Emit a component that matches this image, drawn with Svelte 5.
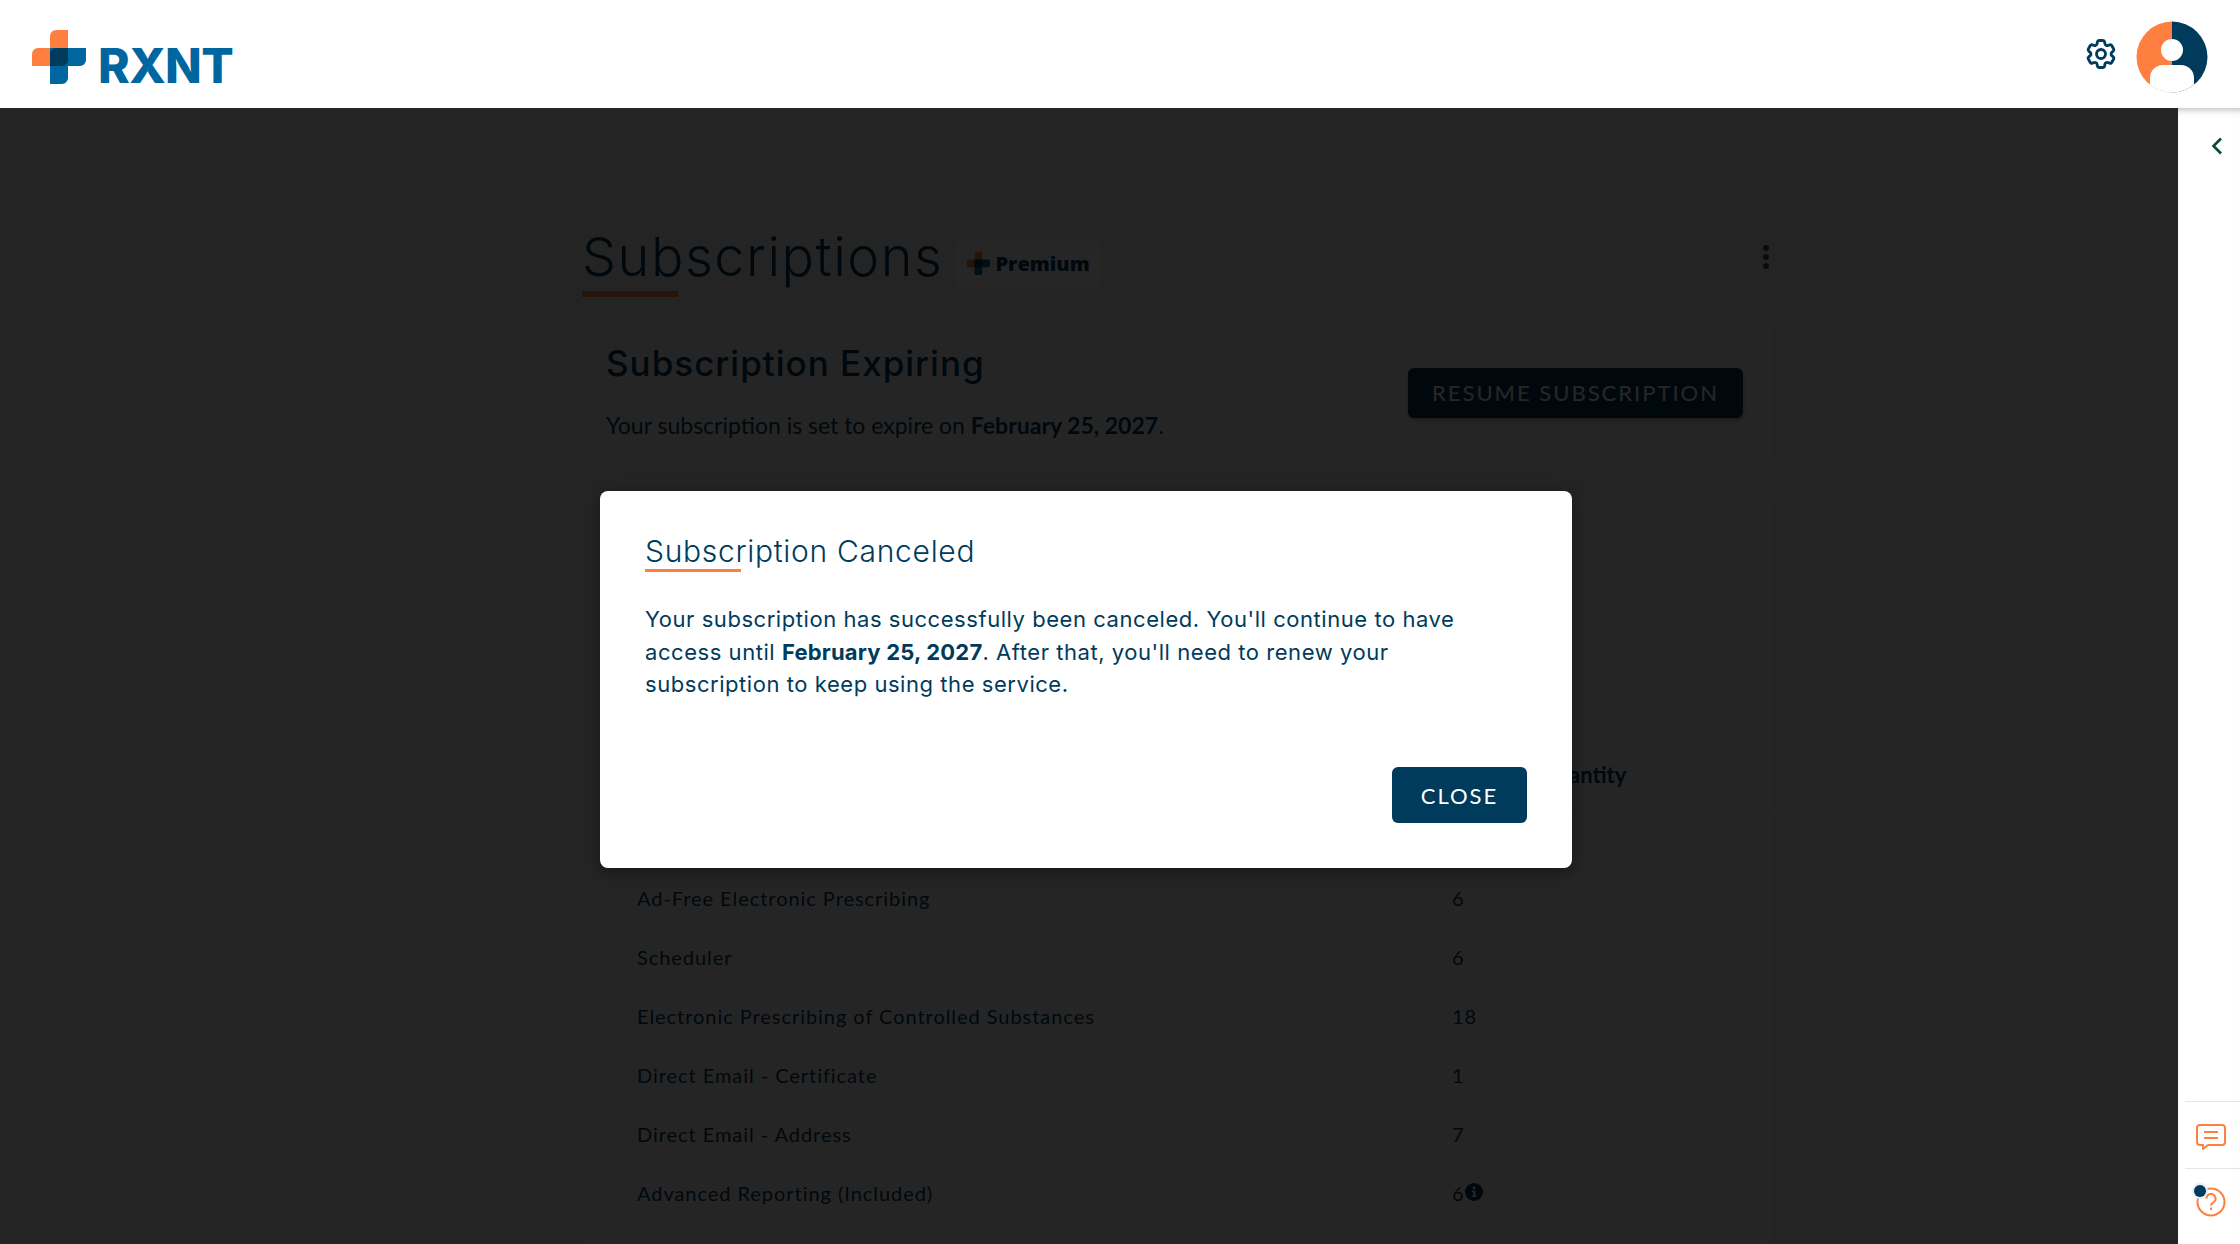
<script>
  const rows = [
    { name: 'Ad-Free Electronic Prescribing', qty: 6 },
    { name: 'Scheduler', qty: 6 },
    { name: 'Electronic Prescribing of Controlled Substances', qty: 18 },
    { name: 'Direct Email - Certificate', qty: 1 },
    { name: 'Direct Email - Address', qty: 7 },
    { name: 'Advanced Reporting (Included)', qty: 6, info: true }
  ];
</script>

<div class="app">
  <header class="topbar">
    <div class="logo">
      <svg width="56" height="56" viewBox="0 0 56 56" aria-hidden="true">
        <path d="M26 2H38V38H2V26a6 6 0 0 1 6-6H20V8a6 6 0 0 1 6-6z" fill="#ff7f41" />
        <path d="M20 20H56V32a6 6 0 0 1-6 6H38V50a6 6 0 0 1-6 6H20z" fill="#00669f" />
        <path d="M26 20H38V32a6 6 0 0 1-6 6H20V26a6 6 0 0 1 6-6z" fill="#003b5c" />
      </svg>
      <span class="wordmark">RXNT</span>
    </div>
    <div class="topbar-right">
      <svg class="gear" width="36" height="36" viewBox="0 0 24 24" fill="none" stroke="#003b5c" stroke-width="1.9" aria-hidden="true">
        <path d="M9.594 3.94c.09-.542.56-.94 1.11-.94h2.593c.55 0 1.02.398 1.11.94l.213 1.281c.063.374.313.686.645.87.074.04.147.083.22.127.325.196.72.257 1.075.124l1.217-.456a1.125 1.125 0 0 1 1.37.49l1.296 2.247a1.125 1.125 0 0 1-.26 1.431l-1.003.827c-.293.241-.438.613-.43.992a7.723 7.723 0 0 1 0 .255c-.008.378.137.75.43.991l1.004.827c.424.35.534.955.26 1.43l-1.298 2.247a1.125 1.125 0 0 1-1.369.491l-1.217-.456c-.355-.133-.75-.072-1.076.124a6.47 6.47 0 0 1-.22.128c-.331.183-.581.495-.644.869l-.213 1.281c-.09.543-.56.94-1.11.94h-2.594c-.55 0-1.019-.398-1.11-.94l-.213-1.281c-.062-.374-.312-.686-.644-.87a6.52 6.52 0 0 1-.22-.127c-.325-.196-.72-.257-1.076-.124l-1.217.456a1.125 1.125 0 0 1-1.369-.49l-1.297-2.247a1.125 1.125 0 0 1 .26-1.431l1.004-.827c.292-.24.437-.613.43-.991a6.932 6.932 0 0 1 0-.255c.007-.38-.138-.751-.43-.992l-1.004-.827a1.125 1.125 0 0 1-.26-1.43l1.297-2.247a1.125 1.125 0 0 1 1.37-.491l1.216.456c.356.133.751.072 1.076-.124.072-.044.146-.086.22-.128.332-.183.582-.495.644-.869l.214-1.28Z" />
        <circle cx="12" cy="12" r="3" />
      </svg>
      <svg class="avatar" width="72" height="72" viewBox="0 0 72 72" aria-hidden="true">
        <defs>
          <clipPath id="avatarClip"><circle cx="36" cy="36" r="35.5" /></clipPath>
        </defs>
        <g clip-path="url(#avatarClip)">
          <rect width="36" height="72" fill="#ff7f41" />
          <rect x="36" width="36" height="72" fill="#003b5c" />
          <circle cx="36" cy="29" r="11" fill="#fff" />
          <rect x="14" y="44" width="44" height="40" rx="13" fill="#fff" />
        </g>
      </svg>
    </div>
  </header>

  <div class="workspace">
    <main class="main">
      <div class="content">
        <div class="title-row">
          <h1 class="page-title">Subscriptions</h1>
          <span class="badge">
            <svg width="24" height="24" viewBox="0 0 56 56" aria-hidden="true">
              <path d="M26 2H38V38H2V26a6 6 0 0 1 6-6H20V8a6 6 0 0 1 6-6z" fill="#ff7f41" />
              <path d="M20 20H56V32a6 6 0 0 1-6 6H38V50a6 6 0 0 1-6 6H20z" fill="#00669f" />
              <path d="M26 20H38V32a6 6 0 0 1-6 6H20V26a6 6 0 0 1 6-6z" fill="#003b5c" />
            </svg>
            Premium
          </span>
          <div class="kebab"><i></i><i></i><i></i></div>
        </div>

        <section class="card expiring">
          <div class="expiring-text">
            <h2>Subscription Expiring</h2>
            <p>Your subscription is set to expire on <b>February 25, 2027</b>.</p>
          </div>
          <button class="resume">RESUME SUBSCRIPTION</button>
        </section>

        <section class="card details">
          <div class="table-head"><span>Quantity</span></div>
          {#each rows as row}
            <div class="row">
              <span>{row.name}</span>
              <span class="qty">
                {row.qty}
                {#if row.info}
                  <svg class="info" width="18" height="18" viewBox="0 0 18 18" aria-hidden="true">
                    <circle cx="9" cy="9" r="9" fill="#003b5c" />
                    <rect x="7.8" y="3.5" width="2.6" height="2.6" fill="#fff" />
                    <path d="M6.8 7.4h3.6v5h1.2v1.6H6.8v-1.6H8v-3.4H6.8z" fill="#fff" />
                  </svg>
                {/if}
              </span>
            </div>
          {/each}
        </section>
      </div>

      <div class="overlay">
        <div class="modal">
          <h3>Subscription Canceled</h3>
          <p>Your subscription has successfully been canceled. You'll continue to have access until <b>February 25, 2027</b>. After that, you'll need to renew your subscription to keep using the service.</p>
          <div class="modal-actions">
            <button class="close">CLOSE</button>
          </div>
        </div>
      </div>
    </main>

    <aside class="sidebar">
      <div class="collapse">
        <svg width="12" height="18" viewBox="0 0 12 18" fill="none" stroke="#0b4a3a" stroke-width="2.6" aria-hidden="true">
          <path d="M10 1.5 2.5 9l7.5 7.5" />
        </svg>
      </div>
      <div class="side-actions">
        <div class="side-item chat">
          <svg width="30" height="26" viewBox="0 0 30 26" fill="none" stroke="#ff7f41" stroke-width="2" aria-hidden="true">
            <path d="M4 1h22a3 3 0 0 1 3 3v14a3 3 0 0 1-3 3H12l-5 4v-4H4a3 3 0 0 1-3-3V4a3 3 0 0 1 3-3z" stroke-linejoin="round" />
            <path d="M8 8h14M8 14h14" />
          </svg>
        </div>
        <div class="side-item help">
          <span class="dot"></span>
          <svg width="30" height="30" viewBox="0 0 30 30" fill="none" stroke="#ff7f41" stroke-width="2" aria-hidden="true">
            <circle cx="15" cy="15" r="13.5" />
            <path d="M10.5 11.5a4.5 4.5 0 1 1 6.8 3.8c-1.4.9-2.3 1.7-2.3 3.4" />
            <path d="M15 20.5v2.5" />
          </svg>
        </div>
      </div>
    </aside>
  </div>
</div>

<style>
  :global(body) {
    margin: 0;
    overflow: hidden;
    background: #fff;
  }

  .app {
    display: flex;
    flex-direction: column;
    height: 1244px;
    color: #003b5c;
    font-family: Lato, "Open Sans", sans-serif;
  }

  .topbar {
    position: relative;
    z-index: 2;
    flex: 0 0 108px;
    display: flex;
    align-items: center;
    justify-content: space-between;
    padding: 0 32px 0 30px;
    background: #fff;
  }

  .logo {
    display: flex;
    align-items: center;
    gap: 12px;
    margin-top: 4px;
  }

  .wordmark {
    font-family: Inter, sans-serif;
    font-size: 48px;
    font-weight: 800;
    line-height: 1;
    color: #00669f;
    margin-top: 20px;
    letter-spacing: -0.6px;
  }

  .topbar-right {
    display: flex;
    align-items: center;
    gap: 17px;
    margin-top: 5px;
  }

  .gear {
    margin-top: -6px;
  }

  .workspace {
    flex: 1;
    display: flex;
    min-height: 0;
  }

  .main {
    position: relative;
    flex: 1;
    overflow: hidden;
    background: #f2f2f2;
  }

  .content {
    width: 1190px;
    margin-left: 582px;
    padding-top: 113px;
  }

  .title-row {
    display: flex;
    align-items: center;
    height: 72px;
    position: relative;
  }

  .page-title {
    position: relative;
    margin: 0;
    font-family: Inter, sans-serif;
    font-size: 54px;
    font-weight: 300;
    line-height: 72px;
    letter-spacing: 1.5px;
  }

  .page-title::after,
  .modal h3::after {
    content: "";
    position: absolute;
    left: 0;
    width: 96px;
    background: #ff7f41;
  }

  .page-title::after {
    top: 70px;
    height: 6px;
  }

  .badge {
    display: flex;
    align-items: center;
    gap: 5px;
    height: 49px;
    margin: 12px 0 0 12px;
    padding: 0 11px;
    box-sizing: border-box;
    border-radius: 8px;
    background: #fff;
    font-family: "Open Sans", sans-serif;
    font-size: 20px;
    font-weight: 800;
  }

  .kebab {
    margin-left: auto;
    display: flex;
    flex-direction: column;
    gap: 3px;
    padding-right: 3px;
  }

  .kebab i {
    width: 6px;
    height: 6px;
    border-radius: 50%;
    background: #444;
  }

  .card {
    background: #f8f8f8;
    border-radius: 8px;
    box-shadow: 0 0 6px rgba(0, 0, 0, 0.06);
  }

  .expiring {
    display: flex;
    align-items: center;
    justify-content: space-between;
    height: 145px;
    margin-top: 27px;
    padding: 0 29px 0 24px;
    box-sizing: border-box;
  }

  .expiring-text {
    margin-top: -5px;
  }

  .expiring h2 {
    margin: 0 0 24px;
    font-family: Inter, sans-serif;
    font-size: 35px;
    font-weight: 500;
    line-height: 46px;
    letter-spacing: 1px;
  }

  .expiring p {
    margin: 0;
    font-size: 23px;
    line-height: 30px;
  }

  .resume {
    width: 335px;
    height: 50px;
    border: 0;
    border-radius: 6px;
    background: #003b5c;
    color: #fff;
    font-family: Lato, sans-serif;
    font-size: 22px;
    letter-spacing: 2px;
    box-shadow: 0 2px 4px rgba(0, 0, 0, 0.3);
  }

  .details {
    margin-top: 25px;
    height: 900px;
    padding: 0 55px;
    box-sizing: border-box;
  }

  .table-head {
    height: 320px;
    box-sizing: border-box;
    padding: 270px 0 0 957px;
    margin: 0 -55px 58px;
    border-bottom: 1px solid #e8e8e8;
    font-family: Lato, sans-serif;
    font-size: 22px;
    font-weight: 700;
    line-height: 30px;
  }

  .row {
    display: grid;
    grid-template-columns: 815px 1fr;
    align-items: center;
    height: 59px;
    font-size: 20px;
    letter-spacing: 0.95px;
  }

  .qty {
    display: flex;
    align-items: center;
  }

  .info {
    margin-top: -2px;
  }

  .overlay {
    position: absolute;
    inset: 0;
    background: rgba(0, 0, 0, 0.85);
    display: flex;
    justify-content: center;
    align-items: flex-start;
    padding-top: 383px;
    padding-right: 6px;
    box-sizing: border-box;
  }

  .modal {
    width: 972px;
    height: 377px;
    padding: 42px 45px 0;
    box-sizing: border-box;
    border-radius: 8px;
    background: #fff;
    box-shadow: 0 4px 16px rgba(0, 0, 0, 0.4);
  }

  .modal h3 {
    position: relative;
    margin: 0;
    font-family: Inter, sans-serif;
    font-size: 30px;
    font-weight: 300;
    line-height: 36px;
    letter-spacing: 0.7px;
  }

  .modal h3::after {
    top: 36px;
    height: 3px;
  }

  .modal p {
    max-width: 840px;
    margin: 34px 0 0;
    font-family: Inter, sans-serif;
    font-size: 22px;
    font-weight: 400;
    line-height: 32.5px;
    letter-spacing: 0.55px;
  }

  .modal p b {
    font-weight: 700;
    letter-spacing: 0.2px;
  }

  .modal-actions {
    display: flex;
    justify-content: flex-end;
    margin-top: 66.5px;
  }

  .close {
    width: 135px;
    height: 56px;
    border: 0;
    border-radius: 6px;
    background: #003b5c;
    color: #fff;
    font-family: Lato, sans-serif;
    font-size: 22px;
    letter-spacing: 2px;
  }

  .sidebar {
    position: relative;
    flex: 0 0 62px;
    display: flex;
    flex-direction: column;
    justify-content: space-between;
    background: #fff;
    box-shadow: inset 0 8px 8px -8px rgba(0, 0, 0, 0.4);
  }

  .collapse {
    display: flex;
    justify-content: flex-end;
    padding: 29px 17px 0 0;
  }

  .side-actions {
    display: flex;
    flex-direction: column;
    margin-left: 7px;
  }

  .side-item {
    position: relative;
    display: flex;
    justify-content: center;
    box-sizing: border-box;
    border-top: 1px solid #e6e6e6;
    padding-right: 3px;
  }

  .chat {
    height: 67px;
    padding-top: 22px;
  }

  .help {
    height: 76px;
    padding-top: 18px;
  }

  .dot {
    position: absolute;
    left: 9px;
    top: 16px;
    width: 12px;
    height: 12px;
    border-radius: 50%;
    background: #003b5c;
    box-shadow: 0 0 0 2px #e6edf1;
  }
</style>
